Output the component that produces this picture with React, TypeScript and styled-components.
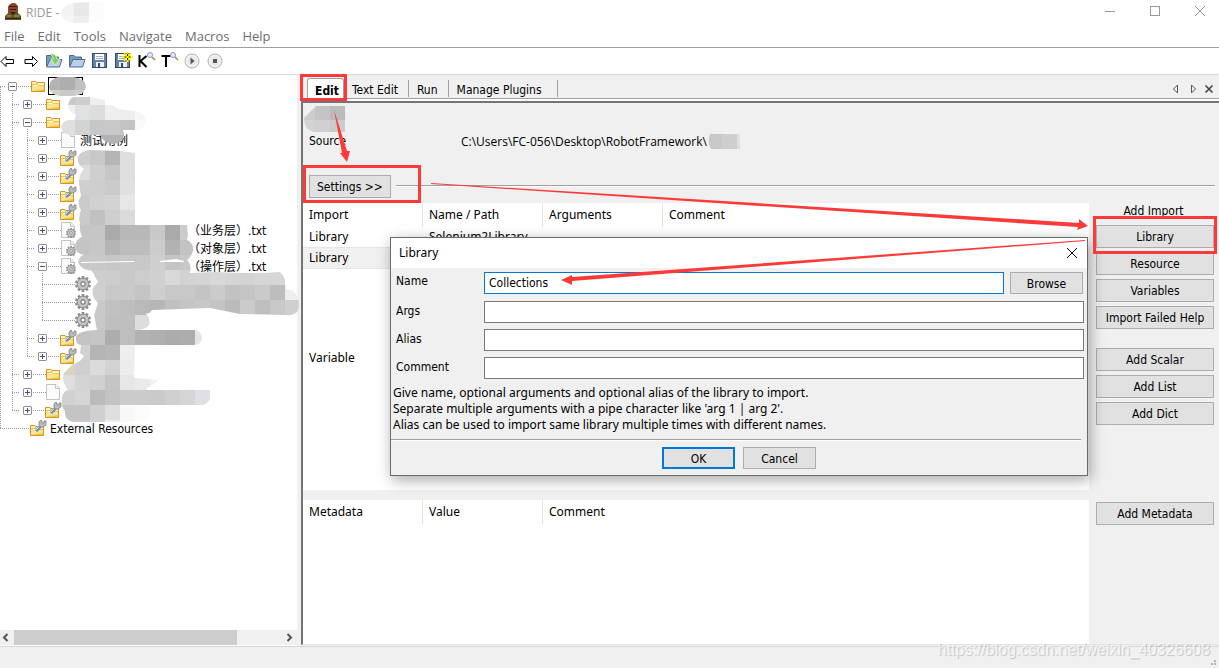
import React from 'react';
import styled, { createGlobalStyle, css } from 'styled-components';

const RED = '#fe3a38';
const UI = '"Open Sans", "Noto Sans", "Noto Sans CJK SC", sans-serif';
const TAHOMA = '"DejaVu Sans Condensed", "DejaVu Sans", "Noto Sans CJK SC", sans-serif';
const WIDE = '"Noto Sans", "Noto Sans CJK SC", sans-serif';

const GlobalStyle = createGlobalStyle`
  * { box-sizing: border-box; }
  body { margin: 0; background: #f0f0f0; color: #000; font-family: ${UI}; font-size: 12px; }
  button, input { font: inherit; color: inherit; margin: 0; }
  svg { display: block; }
`;

const Window = styled.div`
  position: relative;
  display: flex;
  flex-direction: column;
  min-height: 100vh;
  overflow: hidden;
`;

/* ---------- title bar, menu, toolbar ---------- */

const TitleBar = styled.header`
  display: flex;
  align-items: center;
  height: 24px;
  padding: 0 11px 0 4px;
  background: #fff;
  color: #999;
  font-size: 12px;
`;

const TitleText = styled.span`
  flex: 1;
  display: flex;
  align-items: center;
  gap: 2px;
  margin-left: 5px;
`;

const CaptionButton = styled.button`
  width: 16px;
  height: 16px;
  margin-left: 29px;
  padding: 0;
  border: 0;
  background: none;
`;

const MenuBar = styled.nav`
  display: flex;
  align-items: center;
  gap: 13px;
  height: 24px;
  padding: 1px 4px 0;
  background: #fff;
  border-bottom: 1px solid #a0a0a0;
`;

const MenuItem = styled.button`
  padding: 0;
  border: 0;
  background: none;
  color: #6d6d6d;
  font-size: 13px;
  line-height: 18px;
`;

const ToolBar = styled.div`
  display: flex;
  align-items: center;
  gap: 7px;
  height: 27px;
  background: #fff;
  border-bottom: 1px solid #d9d9d9;
`;

const ToolButton = styled.button`
  width: 16px;
  height: 18px;
  padding: 0;
  border: 0;
  background: none;
  & > svg { overflow: visible; }
`;

/* ---------- tree ---------- */

const Main = styled.main`
  flex: 1;
  display: flex;
`;

const Sidebar = styled.aside`
  position: relative;
  display: flex;
  flex-direction: column;
  width: 297px;
  flex-shrink: 0;
  background: #fff;
`;

const Tree = styled.ul`
  flex: 1;
  margin: 0;
  padding: 2px 0 0;
  list-style: none;
`;

const TreeRow = styled.li`
  display: flex;
  align-items: center;
  height: 18px;
  white-space: nowrap;
`;

type Vert = 'full' | 'top' | 'bottom' | 'none';
const vDots = 'repeating-linear-gradient(to bottom, #9a9a9a 0 1px, transparent 1px 2px)';
const hDots = 'repeating-linear-gradient(to right, #9a9a9a 0 1px, transparent 1px 2px)';

const Guide = styled.span<{ $w: number; $x: number; $v: Vert; $h: boolean }>`
  display: flex;
  align-items: center;
  justify-content: center;
  width: ${p => p.$w}px;
  height: 18px;
  background-repeat: no-repeat;
  background-image: ${vDots}, ${hDots};
  background-position: ${p => p.$x}px ${p => (p.$v === 'bottom' ? 10 : 0)}px, ${p => p.$x}px 9px;
  background-size:
    ${p => (p.$v === 'none' ? 0 : 1)}px ${p => (p.$v === 'full' ? 18 : p.$v === 'top' ? 9 : 8)}px,
    ${p => (p.$h ? '100%' : '0')} 1px;
`;

const ExpanderBox = styled.button`
  width: 9px;
  height: 9px;
  padding: 0;
  border: 1px solid #919191;
  border-radius: 1px;
  background: #fff;
  outline: 1px solid #fff;
`;

const NodeIcon = styled.span`
  width: 16px;
  height: 18px;
  margin-right: 3px;
  & > svg { overflow: visible; }
`;

const NodeLabel = styled.span`
  padding-top: 2px;
  font-family: ${TAHOMA};
  line-height: 18px;
`;

const MaskedName = styled.span<{ $w: number; $focus?: boolean }>`
  width: ${p => p.$w}px;
  height: 18px;
  ${p => p.$focus && css`margin-left: -2px; border: 1px solid #000;`}
`;

const TreeMask = styled.svg`
  position: absolute;
  left: 0;
  top: 0;
  pointer-events: none;
  overflow: visible;
`;

const ScrollBar = styled.div`
  display: flex;
  align-items: center;
  height: 15px;
  margin-bottom: 1px;
  background: #f0f0f0;
`;

const ScrollButton = styled.button`
  width: 14px;
  height: 15px;
  padding: 0;
  border: 0;
  background: none;
`;

const ScrollTrack = styled.div`
  flex: 1;
  height: 15px;
  margin-right: 3px;
`;

const ScrollThumb = styled.div`
  width: 84%;
  height: 15px;
  background: #cdcdcd;
`;

/* ---------- notebook ---------- */

const Notebook = styled.section`
  flex: 1;
  min-width: 0;
  display: flex;
  flex-direction: column;
  margin-left: 4px;
`;

const TabStrip = styled.div`
  display: flex;
  align-items: flex-end;
  height: 24px;
  padding-left: 6px;
  border-bottom: 1px solid #a0a0a0;
  box-shadow: 0 2px #fff;
`;

const Tab = styled.button<{ $active?: boolean; $last?: boolean }>`
  position: relative;
  height: 17px;
  padding: 4px ${p => (p.$last ? 15 : 10)}px 0 8px;
  border: 0;
  border-right: 1px solid #a0a0a0;
  background: none;
  font-family: ${TAHOMA};
  line-height: 13px;
  margin-bottom: 1px;
  ${p => p.$active && css`
    height: 20px;
    margin-bottom: 0;
    padding: 5px 4px 0 7px;
    border: 1px solid #a0a0a0;
    border-bottom: 0;
    border-radius: 3px 3px 0 0;
    background: #fff;
    font-weight: bold;
  `}
`;

const TabTools = styled.div`
  display: flex;
  align-items: center;
  gap: 3px;
  margin-left: auto;
  padding: 0 3px 2px 0;
`;

const SmallButton = styled.button`
  width: 14px;
  height: 14px;
  padding: 0;
  border: 0;
  background: none;
`;

const Page = styled.div`
  position: relative;
  flex: 1;
  display: flex;
  flex-direction: column;
  margin-top: 2px;
  margin-bottom: 1px;
  border-top: 2px solid #747474;
  border-left: 2px solid #747474;
  border-bottom: 1px solid #e3e3e3;
`;

const SuiteName = styled.div`
  height: 27px;
  padding: 3px 0 0 1px;
`;

const SourceRow = styled.div`
  display: grid;
  grid-template-columns: 152px auto 1fr;
  align-items: center;
  height: 22px;
  padding-left: 6px;
  font-family: ${TAHOMA};
`;

const FilePath = styled.span`
  font-family: ${UI};
`;

const SettingsRow = styled.div`
  display: flex;
  align-items: flex-start;
  margin-top: 23px;
  height: 28px;
  padding: 0 4px 0 6px;
`;

const Rule = styled.hr`
  flex: 1;
  height: 2px;
  margin: 10px 0 0 5px;
  border: 0;
  border-top: 1px solid #a0a0a0;
  border-bottom: 1px solid #fff;
`;

const Button = styled.button<{ $default?: boolean }>`
  position: relative;
  height: 23px;
  padding: 0 7px;
  border: ${p => (p.$default ? '2px solid #0078d7' : '1px solid #adadad')};
  background: #e1e1e1;
  font-family: ${TAHOMA};
  line-height: 16px;
  white-space: nowrap;
`;

const Frame = styled.span<{ $inset: string }>`
  position: absolute;
  z-index: 1;
  inset: ${p => p.$inset};
  border: 3px solid ${RED};
  pointer-events: none;
`;

const Section = styled.div<{ $min: number; $grow?: boolean }>`
  display: grid;
  grid-template-columns: 1fr 130px;
  min-height: ${p => p.$min}px;
  ${p => p.$grow && css`flex: 1; margin-top: 10px;`}
`;

const ListPane = styled.div`
  background: #fff;
`;

const DataTable = styled.table`
  width: 100%;
  table-layout: fixed;
  border-collapse: separate;
  border-spacing: 0;
  font-family: ${WIDE};
  line-height: 18px;
  th, td { padding: 0 6px; text-align: left; font-weight: normal; }
  th { height: 24px; padding-bottom: 1px; border-right: 1px solid #e5e5e5; }
  th:last-child { border-right: 0; }
  th:not(:last-child) { width: 120px; }
  td { height: 21px; border-bottom: 1px solid #e5e5e5; }
`;

const ItemRow = styled.tr<{ $selected?: boolean }>`
  background: ${p => (p.$selected ? '#f0f0f0' : '#fff')};
`;

const Actions = styled.div`
  display: flex;
  flex-direction: column;
  gap: 4px;
  padding: 2px 5px 0 7px;
`;

const ActionsTitle = styled.span`
  height: 16px;
  padding-right: 3px;
  line-height: 13px;
  text-align: center;
  font-family: ${TAHOMA};
`;

/* ---------- dialog ---------- */

const Dialog = styled.form`
  position: absolute;
  top: 134px;
  left: 87px;
  right: 131px;
  border: 1px solid #6a6a6a;
  background: #f0f0f0;
  box-shadow: 2px 4px 14px rgba(0, 0, 0, 0.35);
  font-family: ${TAHOMA};
`;

const DialogTitle = styled.div`
  display: flex;
  align-items: center;
  justify-content: space-between;
  height: 30px;
  padding: 0 8px 1px;
  background: #fff;
  font-family: ${WIDE};
`;

const Fields = styled.div`
  display: flex;
  flex-direction: column;
  gap: 6px;
  padding: 4px 3px 0 5px;
`;

const Field = styled.div<{ $first?: boolean }>`
  display: flex;
  margin-bottom: ${p => (p.$first ? 1 : 0)}px;
  label { width: 88px; line-height: ${p => (p.$first ? 18 : 20)}px; }
`;

const TextBox = styled.input`
  flex: 1;
  min-width: 0;
  height: 22px;
  padding: 0 4px;
  border: 1px solid #7a7a7a;
  background: #fff;
  &[data-focused='true'] { border-color: #0078d7; }
`;

const DialogButton = styled(Button)`
  width: 73px;
  height: 22px;
  padding-top: 2px;
`;

const BrowseButton = styled(DialogButton)`
  margin: 0 1px 0 6px;
`;

const Help = styled.p`
  margin: 0;
  padding: 6px 2px 6px;
  font-family: ${WIDE};
  line-height: 16px;
`;

const DialogFooter = styled.div`
  display: flex;
  justify-content: center;
  gap: 8px;
  margin: 0 6px 0 0;
  padding: 7px 0 6px 6px;
  border-top: 1px solid #a0a0a0;
  box-shadow: inset 0 1px #fff;
`;

/* ---------- bottom & overlays ---------- */

const StatusBar = styled.footer`
  display: flex;
  justify-content: flex-end;
  align-items: flex-end;
  height: 22px;
  padding: 0 1px 2px;
  border-top: 1px solid #d7d7d7;
`;

const Watermark = styled.span`
  position: absolute;
  right: 9px;
  bottom: 9px;
  color: rgba(255, 255, 255, 0.7);
  font-family: "Liberation Sans", Arial, sans-serif;
  font-size: 16px;
  line-height: 18px;
  text-shadow: 1px 1px 1px rgba(0, 0, 0, 0.2);
`;

const Arrows = styled.svg`
  position: absolute;
  left: 0;
  top: 0;
  pointer-events: none;
`;

/* ---------- mosaics ---------- */

type Band = [y: number, x: number, colors: string];

/* Each band is a run of 15px tiles; a two digit colour is a grey level. */
const tiles = (bands: Band[], size = 15) =>
  bands.flatMap(([y, x, colors]) =>
    colors.split(' ').map((c, i) => (
      <rect key={`${y}-${x}-${i}`} x={x + i * size} y={y} width={size} height={size}
        fill={c.length === 2 ? `#${c}${c}${c}` : `#${c}`} />
    )),
  );

const treeBands: Band[] = [
  [0, 45, 'b4 ae c0'],
  [15, 45, 'd5cfc4 c9 cd ee ff'],
  [30, 60, 'f0 dfe1e5 dd ef ee f6'],
  [45, 60, 'e0dfde d3 c4c8c8 c9 c3 f9'],
  [60, 90, 'b2 b3 b5'],
  [75, 75, 'ce c9 b5 de'],
  [90, 75, 'dd cf c6 de'],
  [105, 75, 'cf ce cb e0'],
  [120, 75, 'cb d1 d3 e6'],
  [135, 75, 'ca c1 cf db'],
  [150, 75, 'c5 c6 aa b8 b8 c8 aa cc'],
  [165, 75, 'c4 c7 b5 bd bd cc b2 c3'],
  [180, 75, 'c9 c9 c6 c9 c8 cf c5 c8'],
  [195, 75, 'd0 ce cc c8 cd d0 d9 d2 d4 d8 d5 d3 d6 d6'],
  [210, 75, 'd0 d0 c8 c9 c5 cf c8 c8 c4 cb c2 c5 ca bd ee'],
  [225, 75, 'd0 c9 c1 be b9 b6 c0 c5 c8 c4 bb cb bf c8 cf'],
  [240, 75, 'cb c9 be bf dd d5 c3 be b9 b6 bc c6 ba c0 c7'],
  [255, 75, 'c3 c5 ad be b2 b0 ac ad e5'],
  [270, 75, 'd2 b4 b7 ee'],
  [285, 60, 'dbd3c1 cf db d2 ec f8 fa'],
  [300, 60, 'de d4d5d3 d0 c4c5ca e6 ea f2'],
  [315, 60, 'd1 d5 bb c3 cb cb ca d0d0ce d7d5d4 dfe0e7'],
  [330, 60, 'c4 c4 d0 df f8 fc ff'],
  [345, 60, 'cb c9c8d0 d4d3db ee f7'],
];

const treeMask = [
  'M58 2 H74 Q86 4 86 12 Q84 20 74 21 H60 Q50 20 49 12 Q50 4 58 2Z',
  'M74 22 Q69 23 68 31 Q70 39 76 40 L74 45 H68 Q61 47 61 53 Q63 60 72 60 H100 Q104 68 113 69 Q124 67 124 59 L123 55 H135 Q145 54 146 46 Q144 37 135 36 L118 34 L105 25 L90 22Z',
  'M90 75 L120 76 L135 78 V150 H187 L188 160 L187 165 Q194 168 193 176 Q190 184 187 185 Q192 190 190 198 L215 197 Q250 199 280 197 Q287 204 286 214 L294 216 Q301 226 298 236 Q294 241 285 240 L240 239 L210 233 L152 235 Q149 240 145 238 Q151 243 149 250 Q146 255 135 255 H195 Q202 257 202 262 Q202 269 195 270 H135 L134 303 L158 305 Q153 311 147 313 V315 H210 V324 Q206 331 200 330 H150 V345 L120 347 H72 Q64 344 65 336 Q61 333 62 322 Q64 315 68 315 Q61 306 64 298 L72 290 L80 286 L84 281 L80 278 L81 270 Q75 269 76 262 Q77 256 97 255 L94 240 L98 228 Q91 222 93 213 L98 207 L92 196 Q80 194 78 187 Q80 180 84 180 Q75 178 75 171 Q76 164 82 162 Q79 155 80 148 Q78 142 81 135 Q76 128 81 121 L79 109 Q78 101 84 94 Q77 90 78 82 Q80 76 90 75Z',
];

function TreeMosaic() {
  return (
    <TreeMask width="297" height="360" aria-hidden="true">
      <clipPath id="tree-mask">{treeMask.map((d, i) => <path key={i} d={d} />)}</clipPath>
      <g clipPath="url(#tree-mask)" shapeRendering="crispEdges">{tiles(treeBands)}</g>
      <path d="M81 187 L134 186 V187 L81 188Z M160 186 L176 184 L184 186 V187 H160Z" fill="#fff" />
    </TreeMask>
  );
}

/* ---------- icons ---------- */

const Folder = ({ tool = false }: { tool?: boolean }) => (
  <svg width="16" height="18">
    <g transform={tool ? 'translate(-2 2)' : 'translate(-1 0)'}>
      <path d="M1.5 14.5V4.5H6L7 5.500H14.500V14.500Z" fill="#f4c637" stroke="#d8912c" />
      <path d="M2 5H6V7H2Z M7 6H14V8H8Z" fill="#fff6cf" />
      <path d="M2 8H7L8.500 9H14V12L2 14Z" fill="#fbe48f" />
      <path d="M4 8.500H7.500" stroke="#fff" />
    </g>
    {tool && (
      <g transform="translate(-1 1)">
        <path d="M6 11L11 6" stroke="#5d8fd0" strokeWidth="3" />
        <path d="M6 10L10 6" stroke="#c9dcf3" />
        <path d="M9 5V2L11 0L12 1V3H14V1L16 1V5L13 7H10Z" fill="#bbb" stroke="#808080" strokeWidth="0.8" />
      </g>
    )}
  </svg>
);

const teeth = [0, 36, 72, 108, 144, 180, 216, 252, 288, 324];

const GearShape = ({ r }: { r: number }) => (
  <g>
    {teeth.map(a => (
      <rect key={a} x={-r * 0.17} y={-r} width={r * 0.34} height={r} transform={`rotate(${a})`} fill="#8c8c8c" />
    ))}
    <circle r={r * 0.72} fill="#c4c4c4" stroke="#8f8f8f" strokeWidth={r * 0.12} />
    <circle r={r * 0.26} fill="#fff" stroke="#7d7d7d" strokeWidth={r * 0.14} />
  </g>
);

const Gear = () => (
  <svg width="16" height="18"><g transform="translate(7 9)"><GearShape r={8} /></g></svg>
);

const Sheet = ({ gear = false }: { gear?: boolean }) => (
  <svg width="16" height="18">
    <path d="M0.500 1.500H10L13.500 5V16.500H0.500Z" fill="#fbfbfb" stroke="#c2c2c2" />
    <path d="M9.500 1.500V5.500H13.500" fill="#eee" stroke="#c2c2c2" />
    {gear && <g transform="translate(10 12)"><GearShape r={5} /></g>}
  </svg>
);

function Expander({ open }: { open?: boolean }) {
  return (
    <ExpanderBox type="button" aria-label={open ? 'Collapse' : 'Expand'}>
      <svg width="7" height="7" shapeRendering="crispEdges">
        <path d={open ? 'M1 3.5H6' : 'M1 3.5H6M3.5 1V6'} stroke="#35519c" />
      </svg>
    </ExpanderBox>
  );
}

const Lens = () => (
  <g>
    <circle cx="12" cy="3" r="2.500" fill="#e4edfa" stroke="#7f9bc8" />
    <path d="M14 5L17 8" stroke="#b98a35" strokeWidth="1.600" />
  </g>
);

const BlueFolder = () => (
  <g>
    <path d="M0.500 14V3.500H5L6.500 5H12.500V7" fill="#7d9cbd" stroke="#4a6a90" />
    <path d="M0.500 15L4 7.500H16L13.500 15Z" fill="#b9d0e8" stroke="#4a6a90" />
  </g>
);

const Floppy = () => (
  <g>
    <rect x="0.500" y="1.500" width="14" height="14" fill="#6283ab" stroke="#33496b" />
    <rect x="3" y="2" width="9" height="6" fill="#fff" />
    <path d="M4 4.500H11M4 6.500H11" stroke="#aab" />
    <rect x="4" y="10" width="8" height="5" fill="#eef1f5" />
    <rect x="6" y="11" width="2" height="4" fill="#33496b" />
  </g>
);

const RoundButton = ({ children }: { children: React.ReactNode }) => (
  <g>
    <circle cx="8" cy="9" r="7" fill="#f4f4f4" stroke="#adadad" />
    <circle cx="8" cy="9" r="5" fill="#e9e9e9" />
    {children}
  </g>
);

const tools: [string, React.ReactNode][] = [
  ['Back', <path d="M1 9.500L6 4.500V7.500H13.500V11.500H6V14.500Z" fill="#fff" stroke="#000" />],
  ['Forward', <path d="M14.500 9.500L9.500 4.500V7.500H2V11.500H9.500V14.500Z" fill="#fff" stroke="#000" />],
  ['Open', <g><BlueFolder /><path d="M4 2Q10 1 11 7H14L9 13L5 7H7.500Q7 4 4 2Z" fill="#7ed34d" stroke="#e6f7dc" strokeWidth="0.700" /></g>],
  ['Open Directory', <BlueFolder />],
  ['Save', <Floppy />],
  ['Save All', <g><Floppy /><path d="M12.500 0V10M7.500 5H17.500M9 1.500L16 8.500M16 1.500L9 8.500" stroke="#fff200" strokeWidth="2" /><path d="M12.500 2V4M12.500 6V8M9.500 5H11.500M13.500 5H15.500" stroke="#222" /></g>],
  ['Search Keywords', <g><path d="M1.500 3V15M8.500 4L2.500 9L8.500 15" stroke="#000" strokeWidth="2" fill="none" /><Lens /></g>],
  ['Search Tests', <g><path d="M0.500 4H9.500M5 4V15" stroke="#000" strokeWidth="2" fill="none" /><Lens /></g>],
  ['Run', <RoundButton><path d="M6.500 5.500L10.500 9L6.500 12.500Z" fill="#555" /></RoundButton>],
  ['Stop', <RoundButton><rect x="6" y="7" width="4" height="4" fill="#555" /></RoundButton>],
];

/* ---------- tree data ---------- */

type Node = {
  depth: number;
  state?: 'open' | 'closed';
  last?: boolean;
  icon: React.ReactNode;
  mask?: number;
  label?: string;
};

const resource: Node = { depth: 2, state: 'closed', icon: <Folder tool /> };

const nodes: Node[] = [
  { depth: 1, state: 'closed', icon: <Folder /> },
  { depth: 1, state: 'open', icon: <Folder /> },
  { depth: 2, state: 'closed', icon: <Sheet />, label: '测试用例' },
  resource, resource, resource, resource,
  { depth: 2, state: 'closed', icon: <Sheet gear />, mask: 108, label: '（业务层）.txt' },
  { depth: 2, state: 'closed', icon: <Sheet gear />, mask: 108, label: '（对象层）.txt' },
  { depth: 2, state: 'open', icon: <Sheet gear />, mask: 108, label: '（操作层）.txt' },
  { depth: 3, icon: <Gear /> },
  { depth: 3, icon: <Gear /> },
  { depth: 3, icon: <Gear />, last: true },
  resource,
  { ...resource, last: true },
  { depth: 1, state: 'closed', icon: <Folder /> },
  { depth: 1, state: 'closed', icon: <Sheet /> },
  { depth: 1, state: 'closed', icon: <Folder tool />, last: true },
];

function TreeItem({ node }: { node: Node }) {
  const { depth, state, last, icon, mask, label } = node;
  return (
    <TreeRow>
      <Guide $w={5} $x={0} $v="full" $h={false} />
      {Array.from({ length: depth }, (_, i) => {
        const own = i === depth - 1;
        return <Guide key={i} $w={15} $x={7} $v={own && last ? 'top' : 'full'} $h={own} />;
      })}
      {state ? (
        <>
          <Guide $w={15} $x={7} $v={state === 'open' ? 'bottom' : 'none'} $h>
            <Expander open={state === 'open'} />
          </Guide>
          <Guide $w={11} $x={0} $v="none" $h />
        </>
      ) : (
        <Guide $w={26} $x={0} $v="none" $h />
      )}
      <NodeIcon>{icon}</NodeIcon>
      {mask && <MaskedName $w={mask} />}
      {label && <NodeLabel>{label}</NodeLabel>}
    </TreeRow>
  );
}

function SuiteTree() {
  return (
    <Sidebar>
      <Tree>
        <TreeRow>
          <Guide $w={5} $x={0} $v="bottom" $h />
          <Guide $w={15} $x={7} $v="bottom" $h><Expander open /></Guide>
          <Guide $w={11} $x={0} $v="none" $h />
          <NodeIcon><Folder /></NodeIcon>
          <MaskedName $w={35} $focus />
        </TreeRow>
        {nodes.map((node, i) => <TreeItem key={i} node={node} />)}
        <TreeRow>
          <Guide $w={31} $x={0} $v="top" $h />
          <NodeIcon><Folder tool /></NodeIcon>
          <NodeLabel>External Resources</NodeLabel>
        </TreeRow>
      </Tree>
      <TreeMosaic />
      <ScrollBar>
        <ScrollButton type="button" aria-label="Scroll left">
          <svg width="14" height="15"><path d="M7.500 4L4 7.500L7.500 11" fill="none" stroke="#555" strokeWidth="2" /></svg>
        </ScrollButton>
        <ScrollTrack><ScrollThumb /></ScrollTrack>
        <ScrollButton type="button" aria-label="Scroll right">
          <svg width="14" height="15"><path d="M4.500 4L8 7.500L4.500 11" fill="none" stroke="#555" strokeWidth="2" /></svg>
        </ScrollButton>
      </ScrollBar>
    </Sidebar>
  );
}

/* ---------- editor ---------- */

function LibraryDialog() {
  return (
    <Dialog onSubmit={e => e.preventDefault()}>
      <DialogTitle>
        Library
        <SmallButton type="button" aria-label="Close">
          <svg width="14" height="14"><path d="M2 2L12 12M12 2L2 12" stroke="#000" /></svg>
        </SmallButton>
      </DialogTitle>
      <Fields>
        <Field $first>
          <label htmlFor="lib-name">Name</label>
          <TextBox id="lib-name" defaultValue="Collections" data-focused="true" />
          <BrowseButton type="button">Browse</BrowseButton>
        </Field>
        <Field>
          <label htmlFor="lib-args">Args</label>
          <TextBox id="lib-args" />
        </Field>
        <Field>
          <label htmlFor="lib-alias">Alias</label>
          <TextBox id="lib-alias" />
        </Field>
        <Field>
          <label htmlFor="lib-comment">Comment</label>
          <TextBox id="lib-comment" />
        </Field>
      </Fields>
      <Help>
        Give name, optional arguments and optional alias of the library to import.<br />
        Separate multiple arguments with a pipe character like 'arg 1 | arg 2'.<br />
        Alias can be used to import same library multiple times with different names.
      </Help>
      <DialogFooter>
        <DialogButton type="submit" $default>OK</DialogButton>
        <DialogButton type="button">Cancel</DialogButton>
      </DialogFooter>
    </Dialog>
  );
}

function Editor() {
  return (
    <Notebook>
      <TabStrip>
        <Tab $active>Edit<Frame $inset="-5px -4px -3px -8px" /></Tab>
        <Tab>Text Edit</Tab>
        <Tab>Run</Tab>
        <Tab $last>Manage Plugins</Tab>
        <TabTools>
          <SmallButton aria-label="Previous tab"><svg width="14" height="14"><path d="M9.500 3V11L5.500 7Z" fill="none" stroke="#555" /></svg></SmallButton>
          <SmallButton aria-label="Next tab"><svg width="14" height="14"><path d="M6.500 3V11L10.500 7Z" fill="none" stroke="#555" /></svg></SmallButton>
          <SmallButton aria-label="Close tab"><svg width="14" height="14"><path d="M3.500 3.500L10.500 10.500M10.500 3.500L3.500 10.500" stroke="#444" strokeWidth="1.600" /></svg></SmallButton>
        </TabTools>
      </TabStrip>
      <Page>
        <SuiteName>
          <svg width="42" height="27" aria-hidden="true">
            <clipPath id="name-mask"><path d="M12 0H41V26H10Q0 24 0 12Z" /></clipPath>
            <g clipPath="url(#name-mask)">{tiles([[-1, -4, 'cc c4 bb c8'], [14, -4, 'd3 d0 cb dc']])}</g>
          </svg>
        </SuiteName>
        <SourceRow>
          <span>Source</span>
          <FilePath>C:\Users\FC-056\Desktop\RobotFramework\</FilePath>
          <svg width="34" height="15" aria-hidden="true">
            <clipPath id="path-mask"><path d="M3 0H33V15H4Q0 8 3 0Z" /></clipPath>
            <g clipPath="url(#path-mask)">{tiles([[0, 0, 'c8 ce df']])}</g>
          </svg>
        </SourceRow>
        <SettingsRow>
          <Button>Settings &gt;&gt;<Frame $inset="-11px -31px -6px -7px" /></Button>
          <Rule />
        </SettingsRow>
        <Section $min={143}>
          <ListPane>
            <DataTable>
              <thead>
                <tr><th>Import</th><th>Name / Path</th><th>Arguments</th><th>Comment</th></tr>
              </thead>
              <tbody>
                <ItemRow><td>Library</td><td>Selenium2Library</td><td /><td /></ItemRow>
                <ItemRow $selected><td>Library</td><td /><td /><td /></ItemRow>
              </tbody>
            </DataTable>
          </ListPane>
          <Actions>
            <ActionsTitle>Add Import</ActionsTitle>
            <Button>Library<Frame $inset="-10px -4px -7px -4px" /></Button>
            <Button>Resource</Button>
            <Button>Variables</Button>
            <Button>Import Failed Help</Button>
          </Actions>
        </Section>
        <Section $min={144}>
          <ListPane>
            <DataTable>
              <thead><tr><th>Variable</th><th /><th /></tr></thead>
            </DataTable>
          </ListPane>
          <Actions>
            <Button>Add Scalar</Button>
            <Button>Add List</Button>
            <Button>Add Dict</Button>
          </Actions>
        </Section>
        <Section $min={140} $grow>
          <ListPane>
            <DataTable>
              <thead><tr><th>Metadata</th><th>Value</th><th>Comment</th></tr></thead>
            </DataTable>
          </ListPane>
          <Actions><Button>Add Metadata</Button></Actions>
        </Section>
        <LibraryDialog />
      </Page>
    </Notebook>
  );
}

export default function App() {
  return (
    <Window>
      <GlobalStyle />
      <TitleBar>
        <svg width="17" height="18" aria-hidden="true">
          <path d="M5 2L8 0H11L14 3V10H4V4Z" fill="#8b4428" />
          <path d="M5 3H13V4H5Z M6 6H12V7H6Z" fill="#3e1c12" />
          <path d="M1 17V13L5 9H13L17 13V17Z" fill="#65552a" />
          <path d="M3 12H7V14H3Z M10 12H15V14H10Z" fill="#8f7c3c" />
          <path d="M6 9H12L9 12Z M1 15H17V16H1Z" fill="#30220f" />
        </svg>
        <TitleText>
          RIDE -
          <svg width="43" height="21" aria-hidden="true">
            <clipPath id="title-mask"><path d="M12 1L28 0L43 1V20L12 21Q0 18 0 10Q3 3 12 1Z" /></clipPath>
            <g clipPath="url(#title-mask)">{tiles([[-1, -2, 'f3 e8 fc fd'], [14, -2, 'f6 ee fd fd']])}</g>
          </svg>
        </TitleText>
        <CaptionButton aria-label="Minimize"><svg width="16" height="16"><path d="M3 7.500H13" stroke="#999" /></svg></CaptionButton>
        <CaptionButton aria-label="Maximize"><svg width="16" height="16"><rect x="3.500" y="2.500" width="9" height="9" fill="none" stroke="#999" /></svg></CaptionButton>
        <CaptionButton aria-label="Close"><svg width="16" height="16"><path d="M3 2L13 12M13 2L3 12" stroke="#999" /></svg></CaptionButton>
      </TitleBar>
      <MenuBar>
        {['File', 'Edit', 'Tools', 'Navigate', 'Macros', 'Help'].map(m => <MenuItem key={m}>{m}</MenuItem>)}
      </MenuBar>
      <ToolBar>
        {tools.map(([name, art]) => (
          <ToolButton key={name} aria-label={name}><svg width="16" height="18">{art}</svg></ToolButton>
        ))}
      </ToolBar>
      <Main>
        <SuiteTree />
        <Editor />
      </Main>
      <StatusBar>
        <svg width="8" height="8" aria-hidden="true"><path d="M4 2H6V4H4ZM1 5H3V7H1ZM4 5H6V7H4Z" fill="#b5b5b5" /></svg>
      </StatusBar>
      <Arrows width="1219" height="300" fill={RED} aria-hidden="true">
        <path d="M334 110L342 153L340 153L347 162L350 151L347 151Z" />
        <path d="M431 183L1079 223L1079 219L1088 226L1077 230L1078 227L431 184Z" />
        <path d="M1085 240L572 277L572 275L561 280L572 285L572 281L1085 241Z" />
      </Arrows>
      <Watermark>https://blog.csdn.net/weixin_40326608</Watermark>
    </Window>
  );
}
